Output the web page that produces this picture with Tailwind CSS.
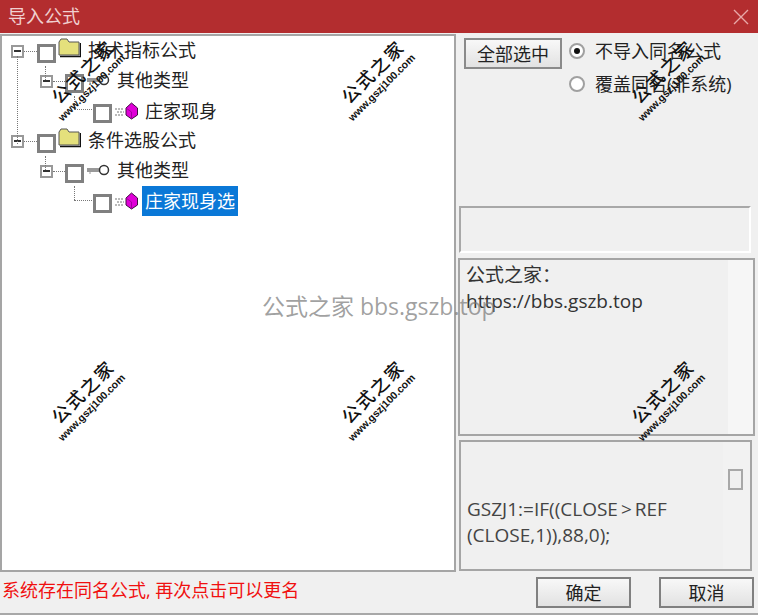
<!DOCTYPE html>
<html lang="zh-CN">
<head>
<meta charset="UTF-8">
<title>导入公式</title>
<script src="https://cdn.jsdelivr.net/npm/@tailwindcss/browser@4"></script>
</head>
<body class="m-0 overflow-hidden">
<div class="relative w-[758px] h-[615px] overflow-hidden bg-[#f0f0f0] text-[18px] leading-[30px] text-[#222] font-['Open_Sans','Noto_Sans_CJK_SC',sans-serif] border-b-2 border-[#a8a8a8]">

  <!-- title bar -->
  <div class="h-[33px] bg-[#b32d2f] flex items-center justify-between pl-[8px] pr-[8px] text-[#f0d0d0] text-[18px]">
    <span class="mt-[-2px]">导入公式</span>
    <svg width="16" height="16" viewBox="0 0 16 16" class="mr-[1px]"><path d="M1 1L15 15M15 1L1 15" stroke="#e8a8a8" stroke-width="1.4" fill="none"/></svg>
  </div>

  <div class="flex h-[538px] mt-[1px]">
    <!-- tree -->
    <div class="relative w-[456px] h-[538px] bg-white border-2 border-[#a5a5a5] shrink-0">
      <!-- connector lines -->
      <div class="absolute left-[15px] top-[20px] h-[88px] border-l border-dotted border-[#777]"></div>
      <div class="absolute left-[43px] top-[30px] h-[14px] border-l border-dotted border-[#777]"></div>
      <div class="absolute left-[43px] top-[120px] h-[14px] border-l border-dotted border-[#777]"></div>
      <div class="absolute left-[72px] top-[60px] h-[14px] border-l border-dotted border-[#777]"></div>
      <div class="absolute left-[72px] top-[150px] h-[14px] border-l border-dotted border-[#777]"></div>
      <div class="absolute left-[72px] top-[73px] w-[18px] border-t border-dotted border-[#777]"></div>
      <div class="absolute left-[72px] top-[164px] w-[18px] border-t border-dotted border-[#777]"></div>

      <!-- row 1 -->
      <div class="flex items-center h-[30px] pl-[9px]">
        <span class="w-[13px] h-[13px] border-2 border-[#999] bg-white flex items-center justify-center shrink-0"><span class="w-[7px] h-[2px] bg-[#333]"></span></span>
        <span class="w-[13px] border-t border-dotted border-[#777]"></span>
        <span class="w-[19px] h-[19px] border-[3px] border-[#808080] bg-white mt-[5px] shrink-0"></span>
        <svg width="23" height="20" viewBox="0 0 23 20" class="ml-[2px] mb-[7px] shrink-0"><path d="M1 17V4L3 1H9L11 4H21V17Z" fill="#e4e07c" stroke="#555" stroke-width="1"/><path d="M2 18.500H22.500V5" stroke="#111" stroke-width="1.500" fill="none"/></svg>
        <span class="ml-[7px] mb-[2px]">技术指标公式</span>
      </div>
      <!-- row 2 -->
      <div class="flex items-center h-[30px] pl-[38px]">
        <span class="w-[13px] h-[13px] border-2 border-[#999] bg-white flex items-center justify-center shrink-0"><span class="w-[7px] h-[2px] bg-[#333]"></span></span>
        <span class="w-[12px] border-t border-dotted border-[#777]"></span>
        <span class="w-[19px] h-[19px] border-[3px] border-[#808080] bg-white mt-[5px] shrink-0"></span>
        <svg width="24" height="12" viewBox="0 0 24 12" class="ml-[2px] mb-[3px] shrink-0"><circle cx="18" cy="6" r="4.500" fill="white" stroke="#333" stroke-width="1.500"/><path d="M1 5H13M1 7H13M4 8.500V9.500" stroke="#333" stroke-width="1"/></svg>
        <span class="ml-[7px] mb-[2px]">其他类型</span>
      </div>
      <!-- row 3 -->
      <div class="flex items-center h-[30px] pl-[91px]">
        <span class="w-[19px] h-[19px] border-[3px] border-[#808080] bg-white mt-[5px] shrink-0"></span>
        <svg width="25" height="18" viewBox="0 0 25 18" class="ml-[2px] mb-[1px] shrink-0"><path d="M1 7H10M3 10H10M1 13H10" stroke="#777" stroke-width="1" stroke-dasharray="2 1"/><path d="M17.500 1L23.500 6V13L17.500 17L12 13V6Z" fill="#e000d8" stroke="#401040" stroke-width="1"/><path d="M12 6L17.500 10V17" fill="none" stroke="#a000a0" stroke-width="1"/></svg>
        <span class="ml-[6px]">庄家现身</span>
      </div>
      <!-- row 4 -->
      <div class="flex items-center h-[30px] pl-[9px]">
        <span class="w-[13px] h-[13px] border-2 border-[#999] bg-white flex items-center justify-center shrink-0"><span class="w-[7px] h-[2px] bg-[#333]"></span></span>
        <span class="w-[13px] border-t border-dotted border-[#777]"></span>
        <span class="w-[19px] h-[19px] border-[3px] border-[#808080] bg-white mt-[5px] shrink-0"></span>
        <svg width="23" height="20" viewBox="0 0 23 20" class="ml-[2px] mb-[7px] shrink-0"><path d="M1 17V4L3 1H9L11 4H21V17Z" fill="#e4e07c" stroke="#555" stroke-width="1"/><path d="M2 18.500H22.500V5" stroke="#111" stroke-width="1.500" fill="none"/></svg>
        <span class="ml-[7px] mb-[2px]">条件选股公式</span>
      </div>
      <!-- row 5 -->
      <div class="flex items-center h-[30px] pl-[38px]">
        <span class="w-[13px] h-[13px] border-2 border-[#999] bg-white flex items-center justify-center shrink-0"><span class="w-[7px] h-[2px] bg-[#333]"></span></span>
        <span class="w-[12px] border-t border-dotted border-[#777]"></span>
        <span class="w-[19px] h-[19px] border-[3px] border-[#808080] bg-white mt-[5px] shrink-0"></span>
        <svg width="24" height="12" viewBox="0 0 24 12" class="ml-[2px] mb-[3px] shrink-0"><circle cx="18" cy="6" r="4.500" fill="white" stroke="#333" stroke-width="1.500"/><path d="M1 5H13M1 7H13M4 8.500V9.500" stroke="#333" stroke-width="1"/></svg>
        <span class="ml-[7px] mb-[2px]">其他类型</span>
      </div>
      <!-- row 6 -->
      <div class="flex items-center h-[30px] pl-[91px]">
        <span class="w-[19px] h-[19px] border-[3px] border-[#808080] bg-white mt-[5px] shrink-0"></span>
        <svg width="25" height="18" viewBox="0 0 25 18" class="ml-[2px] mb-[1px] shrink-0"><path d="M1 7H10M3 10H10M1 13H10" stroke="#777" stroke-width="1" stroke-dasharray="2 1"/><path d="M17.500 1L23.500 6V13L17.500 17L12 13V6Z" fill="#e000d8" stroke="#401040" stroke-width="1"/><path d="M12 6L17.500 10V17" fill="none" stroke="#a000a0" stroke-width="1"/></svg>
        <span class="ml-[3px] bg-[#0a78d7] text-white px-[3px] h-[30px]">庄家现身选</span>
      </div>
    </div>

    <!-- right column -->
    <div class="ml-[3px] w-[296px] flex flex-col">
      <div class="flex h-[172px] pl-[5px] pt-[4px]">
        <button class="w-[98px] h-[31px] border-2 border-[#8a8a8a] bg-gradient-to-b from-[#f8f8f8] to-[#e2e2e2] leading-[26px] text-[18px] text-[#222]">全部选中</button>
        <div class="ml-[7px] mt-[-2px]">
          <div class="flex items-center h-[30px]">
            <span class="w-[16px] h-[16px] rounded-full bg-white border-2 border-[#a0a0a0] flex items-center justify-center"><span class="w-[6px] h-[6px] rounded-full bg-[#111]"></span></span>
            <span class="ml-[10px]">不导入同名公式</span>
          </div>
          <div class="flex items-center h-[30px] mt-[3px]">
            <span class="w-[16px] h-[16px] rounded-full bg-white border-2 border-[#a0a0a0]"></span>
            <span class="ml-[10px]">覆盖同名(非系统)</span>
          </div>
        </div>
      </div>
      <div class="w-[292px] h-[47px] border-2 border-[#a8a8a8] border-r-white border-b-white"></div>
      <div class="mt-[5px] -ml-[1px] w-[297px] h-[178px] border-2 border-[#a5a5a5] bg-[#f0f0f0] flex">
        <div class="flex-1 pl-[6px] pt-[2px] leading-[26px] text-[19px] text-[#333]">公式之家：<br>https://bbs.gszb.top</div>
        <div class="w-[25px] bg-[#f6f6f6]"></div>
      </div>
      <div class="mt-[4px] w-[293px] h-[131px] border-2 border-[#a5a5a5] flex">
        <div class="flex-1 pl-[6px] pt-[54px] leading-[26px] text-[19px] text-[#444]">GSZJ1:=IF((CLOSE<span class="mx-[3px]">&gt;</span>REF<br>(CLOSE,1)),88,0);</div>
        <div class="w-[27px] pt-[27px] pl-[5px] bg-[#f2f2f2]">
          <div class="w-[15px] h-[21px] border-2 border-[#a8a8a8] bg-[#f0f0f0]"></div>
        </div>
      </div>
    </div>
  </div>

  <!-- footer -->
  <div class="flex items-center h-[41px] pl-[2px]">
    <span class="text-[#f01010] w-[534px] mt-[-5px]">系统存在同名公式, 再次点击可以更名</span>
    <button class="w-[95px] h-[31px] border-2 border-[#808080] bg-gradient-to-b from-[#f8f8f8] to-[#e2e2e2] leading-[26px] text-[18px] text-[#222]">确定</button>
    <button class="ml-[28px] w-[95px] h-[31px] border-2 border-[#808080] bg-gradient-to-b from-[#f8f8f8] to-[#e2e2e2] leading-[26px] text-[18px] text-[#222]">取消</button>
  </div>

  <!-- overlay watermarks -->
  <div class="absolute left-[32px] top-[58px] w-[120px] h-[60px] -rotate-45 text-center pointer-events-none text-[#111]"><div class="pl-[10px] text-[18px] leading-[22px] font-medium tracking-[2px] font-['Noto_Sans_CJK_SC',sans-serif]">公式之家</div><div class="text-[10.500px] leading-[14px] font-bold font-['Liberation_Sans',sans-serif]">www.gszj100.com</div></div>
  <div class="absolute left-[322px] top-[58px] w-[120px] h-[60px] -rotate-45 text-center pointer-events-none text-[#111]"><div class="pl-[10px] text-[18px] leading-[22px] font-medium tracking-[2px] font-['Noto_Sans_CJK_SC',sans-serif]">公式之家</div><div class="text-[10.500px] leading-[14px] font-bold font-['Liberation_Sans',sans-serif]">www.gszj100.com</div></div>
  <div class="absolute left-[612px] top-[58px] w-[120px] h-[60px] -rotate-45 text-center pointer-events-none text-[#111]"><div class="pl-[10px] text-[18px] leading-[22px] font-medium tracking-[2px] font-['Noto_Sans_CJK_SC',sans-serif]">公式之家</div><div class="text-[10.500px] leading-[14px] font-bold font-['Liberation_Sans',sans-serif]">www.gszj100.com</div></div>
  <div class="absolute left-[32px] top-[378px] w-[120px] h-[60px] -rotate-45 text-center pointer-events-none text-[#111]"><div class="pl-[10px] text-[18px] leading-[22px] font-medium tracking-[2px] font-['Noto_Sans_CJK_SC',sans-serif]">公式之家</div><div class="text-[10.500px] leading-[14px] font-bold font-['Liberation_Sans',sans-serif]">www.gszj100.com</div></div>
  <div class="absolute left-[322px] top-[378px] w-[120px] h-[60px] -rotate-45 text-center pointer-events-none text-[#111]"><div class="pl-[10px] text-[18px] leading-[22px] font-medium tracking-[2px] font-['Noto_Sans_CJK_SC',sans-serif]">公式之家</div><div class="text-[10.500px] leading-[14px] font-bold font-['Liberation_Sans',sans-serif]">www.gszj100.com</div></div>
  <div class="absolute left-[612px] top-[378px] w-[120px] h-[60px] -rotate-45 text-center pointer-events-none text-[#111]"><div class="pl-[10px] text-[18px] leading-[22px] font-medium tracking-[2px] font-['Noto_Sans_CJK_SC',sans-serif]">公式之家</div><div class="text-[10.500px] leading-[14px] font-bold font-['Liberation_Sans',sans-serif]">www.gszj100.com</div></div>
  <div class="absolute left-[262px] top-[291px] text-[23px] leading-[30px] text-[#777]/70 whitespace-nowrap pointer-events-none">公式之家 bbs.gszb.top</div>
</div>
</body>
</html>
